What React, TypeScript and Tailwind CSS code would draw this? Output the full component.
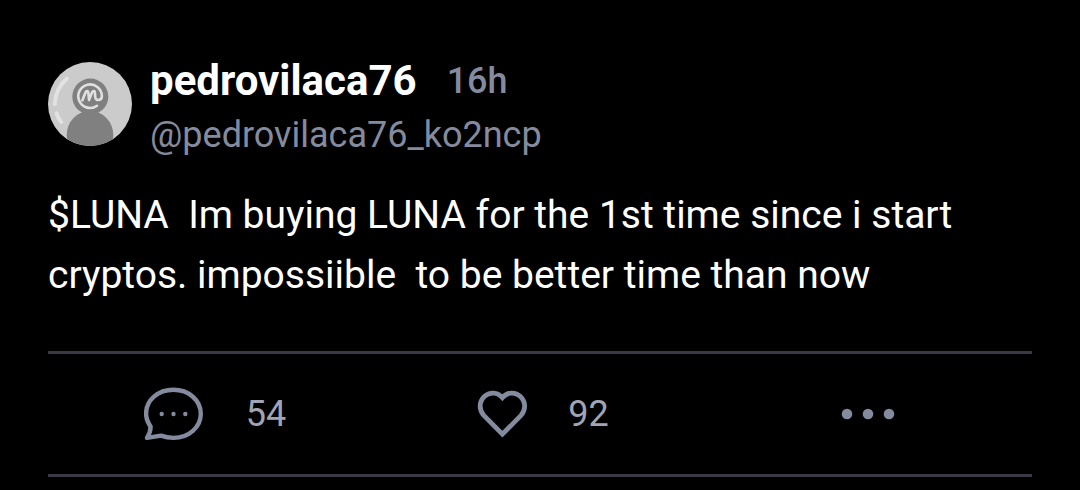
import React from "react";

const post = {
  name: "pedrovilaca76",
  handle: "@pedrovilaca76_ko2ncp",
  age: "16h",
  lines: [
    "$LUNA  Im buying LUNA for the 1st time since i start",
    "cryptos. impossiible  to be better time than now",
  ],
  comments: 54,
  likes: 92,
};

function Avatar() {
  return (
    <svg
      viewBox="0 0 84 84"
      className="mt-2 h-[84px] w-[84px] shrink-0 rounded-full"
      role="img"
      aria-label="avatar"
    >
      <rect width="84" height="84" fill="#cbcbcb" />
      <ellipse cx="42" cy="73" rx="23.3" ry="24" fill="#808080" />
      <circle cx="42.3" cy="34.6" r="18" fill="#808080" />
      <g fill="none" stroke="#e2e2e2" strokeWidth="4" strokeLinecap="round">
        <path d="M19 16.5C11.5 23 7.3 32 6.8 42" />
        <path d="M8.6 51.3C9.6 54.8 11.2 57.6 13.2 60" />
      </g>
      <path
        d="M49 43.8A11.8 11.8 0 1 1 53.9 34C54 38.8 47.4 39.4 47.2 35L47 31.4C46.9 28.2 45 28.4 44 30.6L41 38L40.4 31.2C40.2 28.2 38.4 28.4 37.5 30.6L34.4 38.2"
        fill="none"
        stroke="#e0e0e0"
        strokeWidth="2.6"
        strokeLinecap="round"
        strokeLinejoin="round"
      />
    </svg>
  );
}

function CommentIcon() {
  return (
    <svg viewBox="0 0 60 54" className="h-[54px] w-[60px]" aria-hidden="true">
      <path
        d="M6.6 39.6C3.6 35.4 2.1 31.2 2.1 26.6C2.1 13.3 14 2.8 29.4 2.8C44.8 2.8 56.8 13.3 56.8 26.8C56.8 40.3 44.8 50.9 29.6 50.9C25 50.9 21 50.2 17 48.6L3 50.8C5 48 6.6 44 6.6 39.6Z"
        fill="none"
        stroke="#858b9e"
        strokeWidth="4.4"
        strokeLinejoin="round"
      />
      <g fill="#858b9e">
        <circle cx="17.7" cy="27" r="2.2" />
        <circle cx="29.5" cy="27" r="2.2" />
        <circle cx="41.3" cy="27" r="2.2" />
      </g>
    </svg>
  );
}

function HeartIcon() {
  return (
    <svg viewBox="0 0 51 48" className="h-12 w-[51px]" aria-hidden="true">
      <path
        d="M25.4 7.6C20.6 2 12.6 1.6 7.6 6.3C1.9 11.7 1.7 20 7 25.6L25.4 44.2L43.8 25.6C49.1 20 48.9 11.7 43.2 6.3C38.2 1.6 30.2 2 25.4 7.6Z"
        fill="none"
        stroke="#858b9e"
        strokeWidth="4.8"
      />
    </svg>
  );
}

function MoreIcon() {
  return (
    <svg viewBox="0 0 54 12" className="h-3 w-[54px]" aria-hidden="true">
      <g fill="#858b9e">
        <circle cx="6" cy="6" r="5.3" />
        <circle cx="27" cy="6" r="5.3" />
        <circle cx="48" cy="6" r="5.3" />
      </g>
    </svg>
  );
}

function App() {
  return (
    <div className="min-h-screen bg-black px-12 pt-[54px] font-['Roboto',sans-serif]">
      <article>
        <header className="flex gap-[18px]">
          <Avatar />
          <div className="leading-[54px]">
            <div className="flex gap-[30px]">
              <h1 className="text-[42px] font-bold text-white">{post.name}</h1>
              <time className="text-[36px] font-medium text-[#858b9e]">
                {post.age}
              </time>
            </div>
            <div className="text-[36px] text-[#858b9e]">{post.handle}</div>
          </div>
        </header>
        <p className="mt-[23px] text-[39px] leading-[60px] whitespace-pre-wrap text-white">
          {post.lines.join("\n")}
        </p>
        <div className="mt-[46px] grid h-[126px] grid-cols-3 border-y-3 border-[#3a3a47] text-[36px] text-[#a0a4b4]">
          <button
            type="button"
            aria-label="Comments"
            className="flex items-center justify-center gap-[42px] pl-1.5"
          >
            <CommentIcon />
            <span>{post.comments}</span>
          </button>
          <button
            type="button"
            aria-label="Likes"
            className="flex items-center justify-center gap-10 pl-1.5"
          >
            <HeartIcon />
            <span>{post.likes}</span>
          </button>
          <button
            type="button"
            aria-label="More"
            className="flex items-center justify-center"
          >
            <MoreIcon />
          </button>
        </div>
      </article>
    </div>
  );
}

export default App;
